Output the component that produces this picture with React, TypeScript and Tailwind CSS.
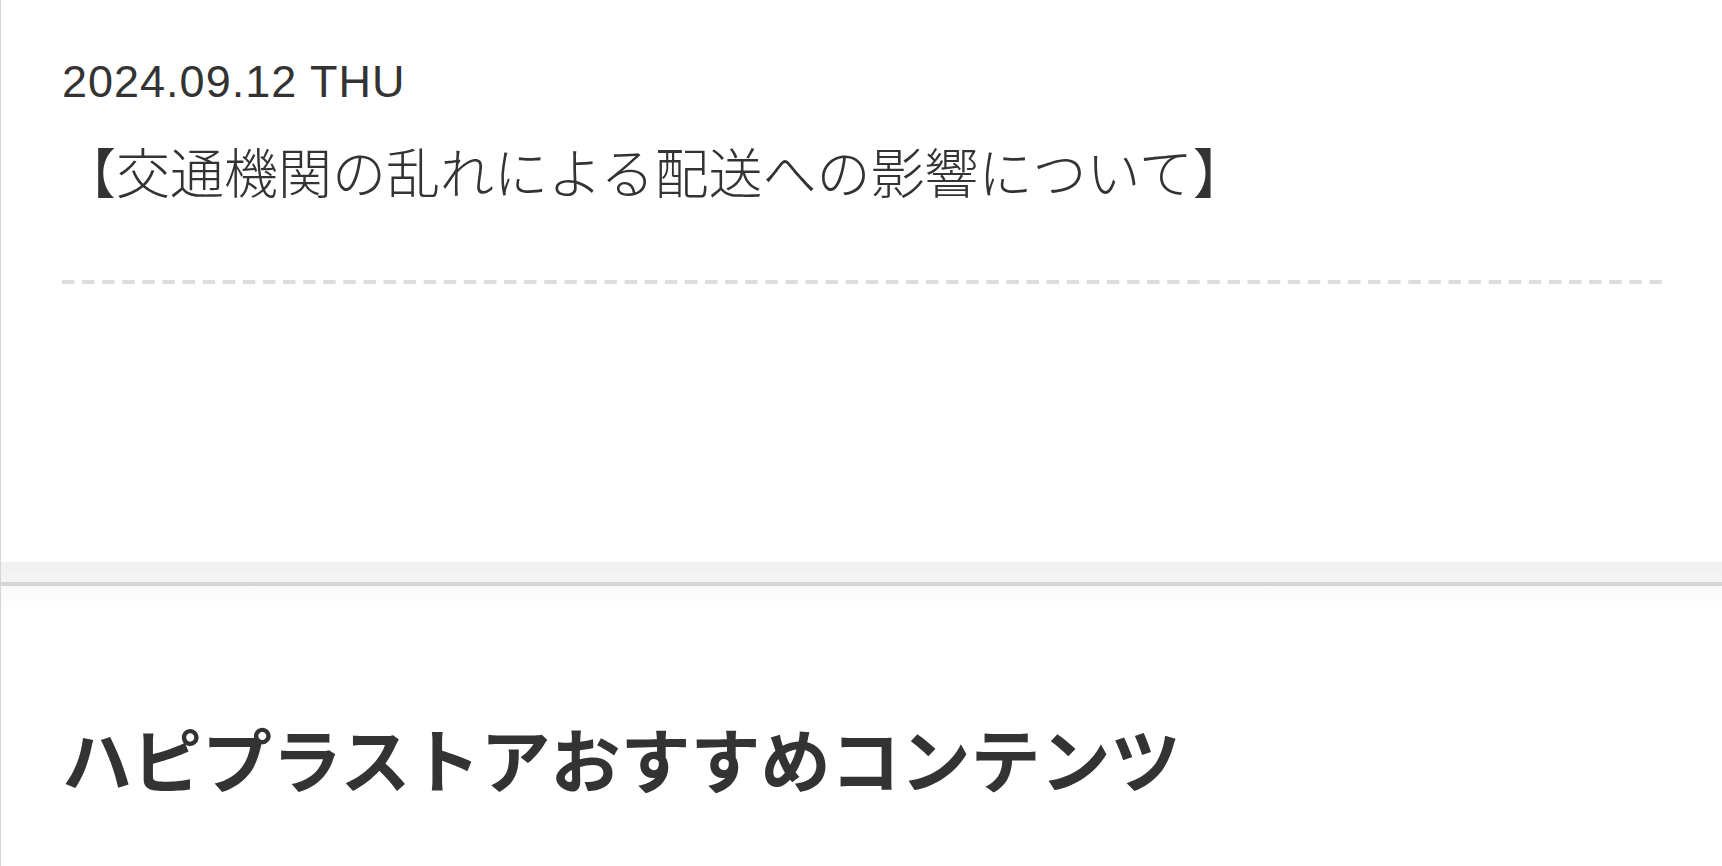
export default function App() {
  return (
    <div className="min-h-screen w-full bg-white border-l border-[#d4d4d4] text-[#333]">
      {/* News item */}
      <section className="pl-[61px] pr-[60px] pt-[59px]">
        <p className="text-[45px] leading-[45px] tracking-[1px] font-['Liberation_Sans',Arial,sans-serif]">2024.09.12 THU</p>
        <h2 className="mt-[40px] text-[54px] leading-[54px] font-light font-['Noto_Sans_CJK_JP','Noto_Sans',sans-serif]">
          【交通機関の乱れによる配送への影響について】
        </h2>
        <div className="mt-[82px] h-[4px] w-full bg-[linear-gradient(to_right,#dddddd_12px,transparent_12px)] bg-[length:20.1px_4px] bg-repeat-x" />
      </section>

      {/* Divider band */}
      <div className="mt-[278px] h-[20px] bg-[linear-gradient(to_bottom,#efefef,#f5f5f5)]" />
      <div className="h-[4px] bg-[#d6d6d6]" />
      <div className="h-[26px] bg-[linear-gradient(to_bottom,#fafafa,#ffffff)]" />

      {/* Recommended */}
      <section className="pl-[61px] pr-[60px] pt-[111px]">
        <h2 className="text-[70px] leading-[70px] font-bold font-['Noto_Sans_CJK_JP','Noto_Sans',sans-serif]">
          ハピプラストアおすすめコンテンツ
        </h2>
      </section>
    </div>
  );
}
